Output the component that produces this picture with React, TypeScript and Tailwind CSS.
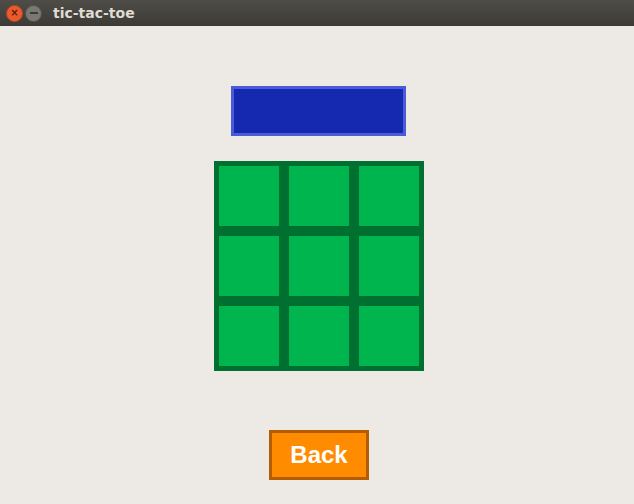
import React from "react";

export default function App() {
  const cells = Array.from({ length: 9 });
  return (
    <div className="w-[634px] h-[504px] bg-[#edeae6] flex flex-col overflow-hidden">
      <div className="h-[26px] bg-gradient-to-b from-[#4f4d48] to-[#3b3a36] flex items-center shrink-0">
        <div className="ml-[6px] w-[17px] h-[17px] rounded-full bg-[#e95a2c] border border-[#b8431e] flex items-center justify-center text-[#5a1a08] text-[10px] leading-none font-bold" style={{ fontFamily: '"DejaVu Sans", sans-serif' }}>
          ×
        </div>
        <div className="ml-[2px] w-[17px] h-[17px] rounded-full bg-[#7a7873] border border-[#55534f] flex items-center justify-center">
          <div className="w-[8px] h-[2px] bg-[#3c3b37]" />
        </div>
        <div className="ml-[11px] text-[#dfdbd2] text-[14px] font-bold" style={{ fontFamily: '"DejaVu Sans", sans-serif' }}>
          tic-tac-toe
        </div>
      </div>
      <div className="flex flex-col items-center">
        <div className="mt-[60px] ml-[3px] w-[175px] h-[50px] bg-[#1428b0] border-[3px] border-[#4a5bd9]" />
        <div className="mt-[25px] ml-[4px] w-[210px] h-[210px] bg-[#007030] p-[5px] grid grid-cols-3 gap-[10px]">
          {cells.map((_, i) => (
            <div key={i} className="w-[60px] h-[60px] bg-[#00b44e]" />
          ))}
        </div>
        <div
          className="mt-[59px] ml-[4px] w-[100px] h-[50px] bg-[#ff8c00] border-[3px] border-[#b35c00] flex items-center justify-center text-white text-[24px] font-bold"
          style={{ fontFamily: '"Liberation Sans", Arial, sans-serif' }}
        >
          Back
        </div>
      </div>
    </div>
  );
}
